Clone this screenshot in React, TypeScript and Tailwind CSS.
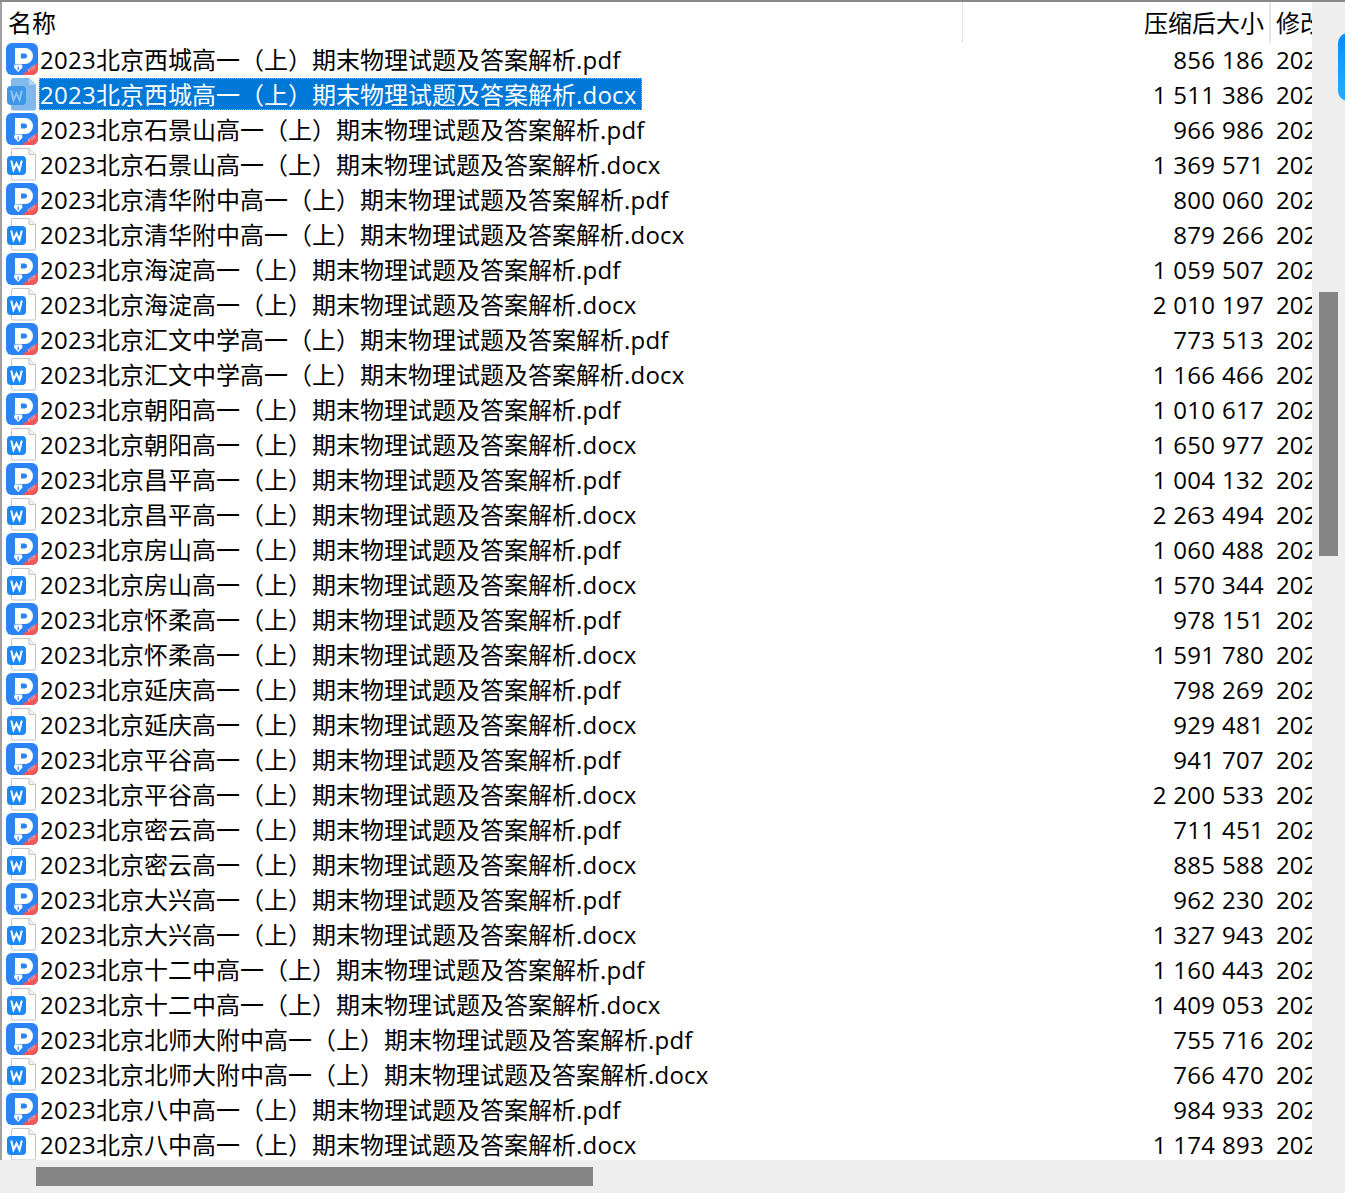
const rows: [string, string, string][] = [
  ['西城', 'pdf', '856 186'],
  ['西城', 'docx', '1 511 386'],
  ['石景山', 'pdf', '966 986'],
  ['石景山', 'docx', '1 369 571'],
  ['清华附中', 'pdf', '800 060'],
  ['清华附中', 'docx', '879 266'],
  ['海淀', 'pdf', '1 059 507'],
  ['海淀', 'docx', '2 010 197'],
  ['汇文中学', 'pdf', '773 513'],
  ['汇文中学', 'docx', '1 166 466'],
  ['朝阳', 'pdf', '1 010 617'],
  ['朝阳', 'docx', '1 650 977'],
  ['昌平', 'pdf', '1 004 132'],
  ['昌平', 'docx', '2 263 494'],
  ['房山', 'pdf', '1 060 488'],
  ['房山', 'docx', '1 570 344'],
  ['怀柔', 'pdf', '978 151'],
  ['怀柔', 'docx', '1 591 780'],
  ['延庆', 'pdf', '798 269'],
  ['延庆', 'docx', '929 481'],
  ['平谷', 'pdf', '941 707'],
  ['平谷', 'docx', '2 200 533'],
  ['密云', 'pdf', '711 451'],
  ['密云', 'docx', '885 588'],
  ['大兴', 'pdf', '962 230'],
  ['大兴', 'docx', '1 327 943'],
  ['十二中', 'pdf', '1 160 443'],
  ['十二中', 'docx', '1 409 053'],
  ['北师大附中', 'pdf', '755 716'],
  ['北师大附中', 'docx', '766 470'],
  ['八中', 'pdf', '984 933'],
  ['八中', 'docx', '1 174 893'],
];

function PdfIcon() {
  return (
    <svg width="34" height="34" viewBox="0 0 34 34" className="shrink-0">
      <rect x="1" y="0" width="32" height="32" rx="6" fill="#2b83f6" />
      <path d="M17 32 L33 19.5 V26 A6 6 0 0 1 27 32 Z" fill="#f4565a" />
      <text x="24" y="29.5" fontSize="5" fill="#ffc4c4" fontFamily="Open Sans, sans-serif" transform="rotate(-35 24 29.5)">PDF</text>
      <path
        d="M10 5 H20 A8 8 0 0 1 20 21 H16 V15.5 H19.5 A2.5 2.5 0 0 0 19.5 10.5 H16 V21 H10 Z"
        fill="#fff"
        fillRule="evenodd"
      />
      <path d="M9.5 21.5 H17 L17.5 24.5 L13.2 29 L9 24.5 Z" fill="#fff" />
      <path d="M13.2 23.5 V27" stroke="#2b83f6" strokeWidth="1.2" />
    </svg>
  );
}

function DocxIcon({ faded }: { faded?: boolean }) {
  return (
    <svg width="34" height="34" viewBox="0 0 34 34" className="shrink-0">
      <path
        d="M6.5 2 A1.5 1.5 0 0 1 8 0.5 H24 L30.5 6.5 V30.5 A1.5 1.5 0 0 1 29 32 H8 A1.5 1.5 0 0 1 6.5 30.5 Z"
        fill={faded ? '#82b9ec' : '#fff'}
        stroke={faded ? '#82b9ec' : '#c3c3c8'}
        strokeWidth="1"
      />
      <path d="M24 0.5 V6.5 H30.5" fill={faded ? '#b5d5f2' : '#f1f1f3'} stroke={faded ? '#a9cdee' : '#c3c3c8'} strokeWidth="1" />
      <rect x="2" y="8" width="19" height="19" rx="4" fill={faded ? '#3d96e6' : '#1d87f5'} />
      <path d="M6.2 12.5 L8.5 22 L11.5 15.5 L14.5 22 L16.8 12.5" fill="none" stroke={faded ? '#8cc2f0' : '#fff'} strokeWidth="2" />
    </svg>
  );
}

export default function App() {
  return (
    <div className="w-[1345px] h-[1193px] overflow-hidden flex flex-col bg-[#eeeeee] font-['Open_Sans','Noto_Sans_CJK_SC',sans-serif] text-[24px] text-black relative">
      <div className="h-[2px] shrink-0 bg-[#888888]" />
      <div className="flex flex-1 min-h-0">
        <div className="w-[1312px] shrink-0 bg-white border-l-2 border-[#a0a0a0] overflow-hidden flex flex-col h-[1158px]">
          {/* header */}
          <div className="flex h-[41px] shrink-0 items-center leading-[41px] whitespace-nowrap">
            <div className="w-[961px] shrink-0 h-full pl-[6px] border-r border-[#e5e5e5]">名称</div>
            <div className="w-[306px] shrink-0 h-full pr-[5px] text-right">压缩后大小</div>
            <div className="w-[2px] shrink-0 h-full bg-[#e5e5e5]" />
            <div className="pl-[5px] h-full">修改</div>
          </div>
          {/* rows */}
          {rows.map(([school, ext, size], i) => {
            const selected = i === 1;
            return (
              <div key={i} className="flex h-[35px] shrink-0 items-start whitespace-nowrap leading-[33px]">
                <div className="w-[961px] shrink-0 flex items-start pl-[3px]">
                  {ext === 'pdf' ? <PdfIcon /> : <DocxIcon faded={selected} />}
                  <span
                    className={
                      selected
                        ? 'pl-[1px] pr-[5px] h-[32px] bg-[#0078d7] text-white outline-1 outline-dotted outline-[#f0a030] -outline-offset-1'
                        : 'pl-[1px]'
                    }
                  >
                    <span className="tracking-[0.25px]">2023</span>北京{school}高一（上）期末物理试题及答案解析
                    <span className="tracking-[0.25px]">.{ext}</span>
                  </span>
                </div>
                <div className="w-[307px] shrink-0 pr-[6px] text-right tracking-[0.3px]">{size}</div>
                <div className="pl-[6px]">2023</div>
              </div>
            );
          })}
        </div>
        {/* vertical scrollbar */}
        <div className="flex-1 pl-[7px] pt-[290px]">
          <div className="w-[19px] h-[264px] bg-[#858585]" />
        </div>
      </div>
      {/* horizontal scrollbar */}
      <div className="h-[33px] shrink-0 pl-[36px] pt-[7px] bg-[#eeeeee]">
        <div className="w-[557px] h-[19px] bg-[#858585]" />
      </div>
      {/* blue tab peeking in from the right edge */}
      <div className="absolute left-[1338px] top-[33px] w-[20px] h-[68px] rounded-l-[10px] bg-gradient-to-b from-[#0a8cf5] to-[#28aefc]" />
    </div>
  );
}
